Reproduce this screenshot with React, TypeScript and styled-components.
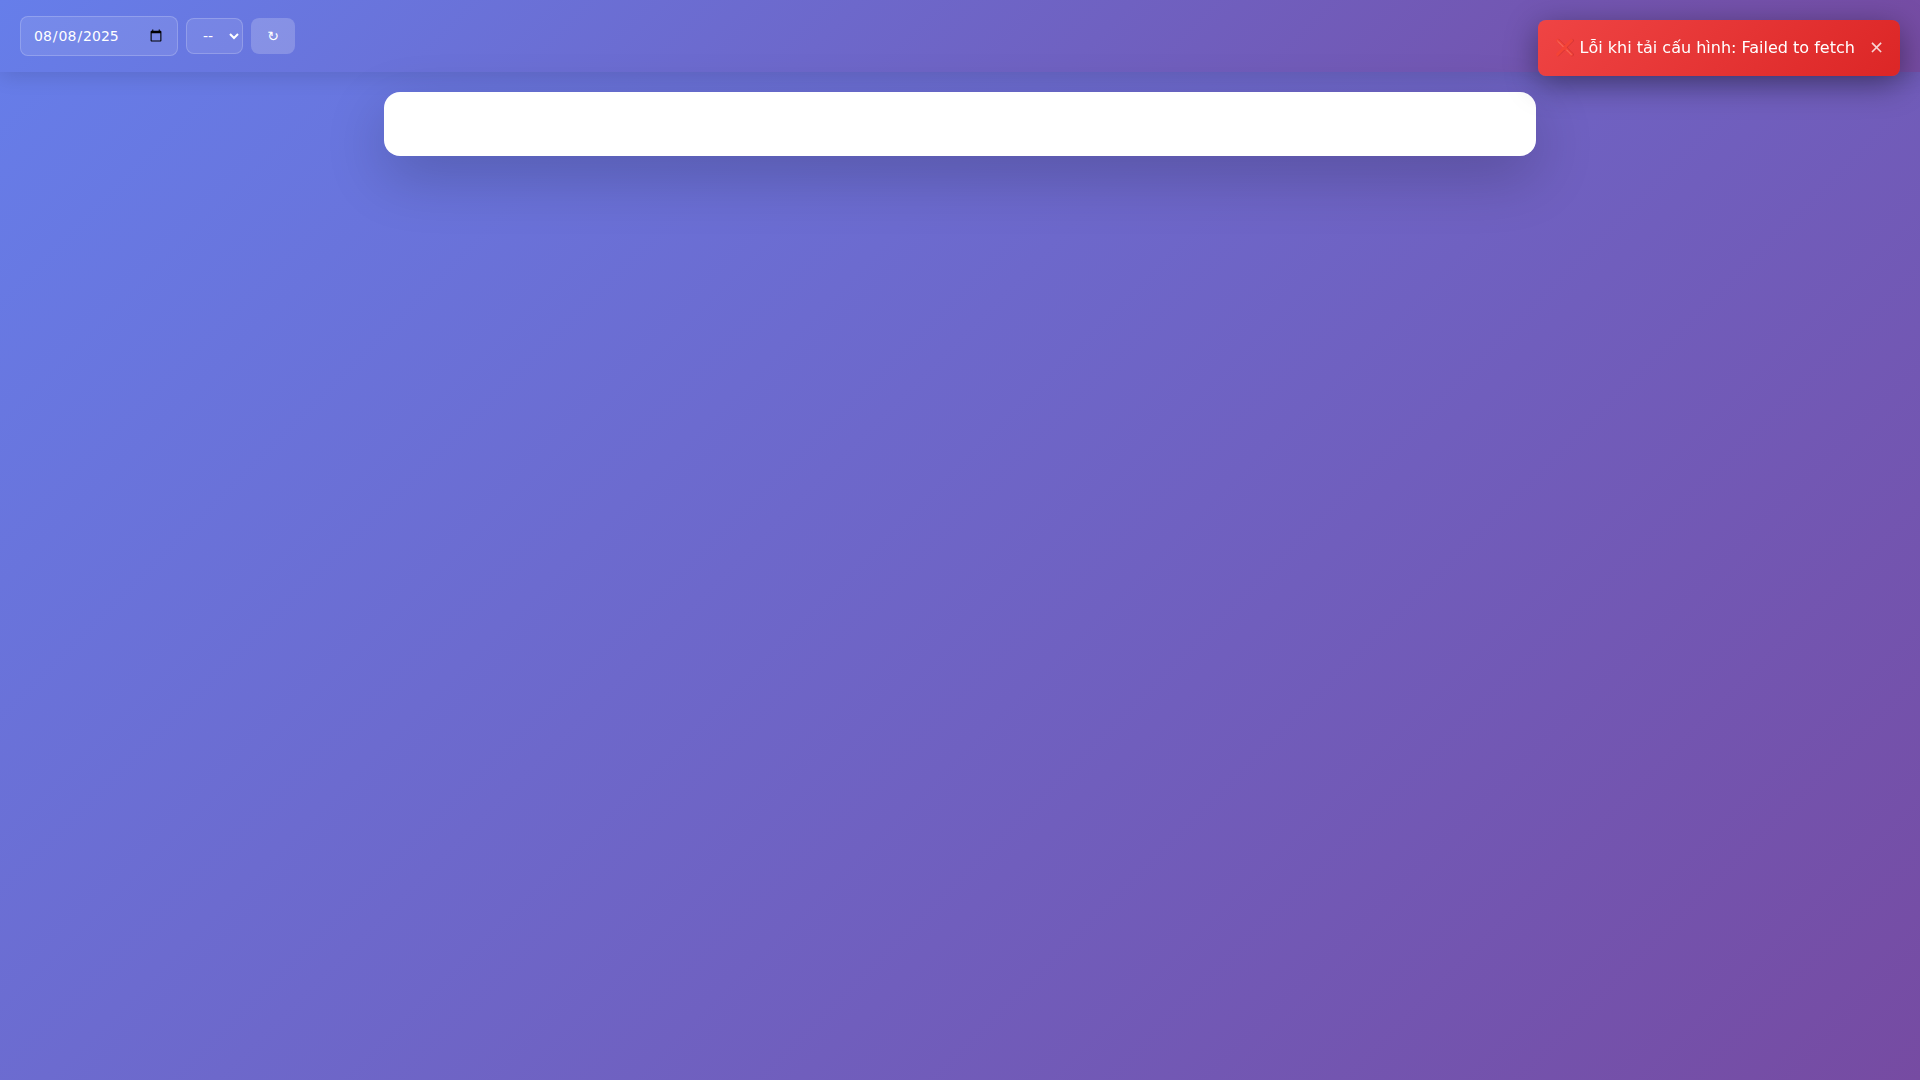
import React from 'react';
import styled, { createGlobalStyle } from 'styled-components';

const Global = createGlobalStyle`
  * { box-sizing: border-box; }
  html, body { margin: 0; padding: 0; }
  body {
    font-family: "DejaVu Sans", sans-serif;
    min-height: 100vh;
    background: linear-gradient(135deg, #667eea 0%, #764ba2 100%);
    background-attachment: fixed;
  }
`;

const Page = styled.div`
  min-height: 100vh;
`;

const Toolbar = styled.header`
  height: 72px;
  display: flex;
  align-items: center;
  gap: 8px;
  padding: 0 20px;
  background: linear-gradient(135deg, #667eea 0%, #764ba2 100%);
  box-shadow: 0 4px 20px rgba(0, 0, 0, 0.12);
`;

const DateInput = styled.input`
  width: 158px;
  height: 40px;
  padding: 8px 12px;
  font: 14px "DejaVu Sans", sans-serif;
  color: #fff;
  background: rgba(255, 255, 255, 0.1);
  border: 1px solid rgba(255, 255, 255, 0.2);
  border-radius: 8px;
  outline: none;
`;

const Select = styled.select`
  width: 57px;
  height: 36px;
  padding: 0 0 0 12px;
  font: 14px "DejaVu Sans", sans-serif;
  color: #fff;
  background: rgba(255, 255, 255, 0.1);
  border: 1px solid rgba(255, 255, 255, 0.2);
  border-radius: 8px;
  outline: none;
`;

const RefreshButton = styled.button`
  width: 44px;
  height: 36px;
  padding: 0;
  font: 14px "DejaVu Sans", sans-serif;
  color: #fff;
  background: rgba(255, 255, 255, 0.2);
  border: none;
  border-radius: 8px;
`;

const Card = styled.main`
  width: 1152px;
  height: 64px;
  margin: 20px auto 0;
  background: #fff;
  border-radius: 16px;
  box-shadow: 0 20px 60px rgba(0, 0, 0, 0.2);
`;

const Toast = styled.div`
  position: fixed;
  top: 20px;
  right: 20px;
  width: 362px;
  height: 56px;
  display: flex;
  align-items: center;
  justify-content: space-between;
  padding: 0 16px 0 16.5px;
  color: #fff;
  background: linear-gradient(135deg, #ef4444, #dc2626);
  border-radius: 8px;
  box-shadow: 0 8px 32px rgba(0, 0, 0, 0.4);
`;

const ToastText = styled.span`
  font-size: 16px;
  line-height: 24px;
  white-space: nowrap;
`;

const CloseButton = styled.button`
  padding: 0 0 3px;
  font: 18px/21px "DejaVu Sans", sans-serif;
  color: #fff;
  background: none;
  border: none;
  opacity: 0.8;
`;

export default function App() {
  return (
    <Page>
      <Global />
      <Toolbar>
        <DateInput type="date" defaultValue="2025-08-08" />
        <Select defaultValue="">
          <option value="">--</option>
        </Select>
        <RefreshButton type="button">↻</RefreshButton>
      </Toolbar>
      <Card />
      <Toast>
        <ToastText>❌ Lỗi khi tải cấu hình: Failed to fetch</ToastText>
        <CloseButton type="button">×</CloseButton>
      </Toast>
    </Page>
  );
}
